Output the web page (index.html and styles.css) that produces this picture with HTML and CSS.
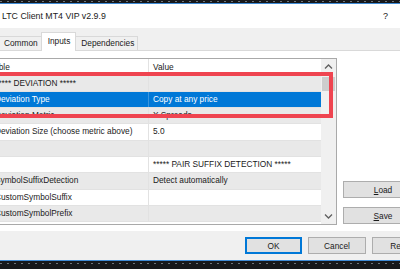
FILE: index.html
```html
<!DOCTYPE html>
<html lang="en">
<head>
  <meta charset="UTF-8">
  <title>LTC Client MT4 VIP v2.9.9</title>
  <link rel="stylesheet" href="styles.css">
</head>
<body>
  <div class="screen">
    <div class="strip strip-top"></div>
    <div class="window">
      <div class="titlebar">
        <span class="title">LTC Client MT4 VIP v2.9.9</span>
        <span class="help">?</span>
      </div>
      <div class="tabs">
        <div class="tab first">Common</div>
        <div class="tab active">Inputs</div>
        <div class="tab">Dependencies</div>
      </div>
      <div class="page">
        <div class="grid-box">
          <div class="list">
            <div class="row head"><div class="cell name">Variable</div><div class="cell">Value</div></div>
            <div class="row alt"><div class="cell name">***** DEVIATION *****</div><div class="cell"></div></div>
            <div class="row selected"><div class="cell name">Deviation Type</div><div class="cell">Copy at any price</div></div>
            <div class="row alt"><div class="cell name">Deviation Metric</div><div class="cell">X Spreads</div></div>
            <div class="row"><div class="cell name">Deviation Size (choose metric above)</div><div class="cell">5.0</div></div>
            <div class="row alt"><div class="cell name"></div><div class="cell"></div></div>
            <div class="row"><div class="cell name"></div><div class="cell">***** PAIR SUFFIX DETECTION *****</div></div>
            <div class="row alt"><div class="cell name">SymbolSuffixDetection</div><div class="cell">Detect automatically</div></div>
            <div class="row"><div class="cell name">CustomSymbolSuffix</div><div class="cell"></div></div>
            <div class="row alt"><div class="cell name">CustomSymbolPrefix</div><div class="cell"></div></div>
          </div>
          <div class="scrollbar">
            <svg class="arrow" width="15" height="16" viewBox="0 0 15 16"><path d="M4 9.5 L7.5 6 L11 9.5" fill="none" stroke="#606060" stroke-width="1.3"/></svg>
            <div class="thumb"></div>
            <div class="track"></div>
            <svg class="arrow" width="15" height="16" viewBox="0 0 15 16"><path d="M4 6.5 L7.5 10 L11 6.5" fill="none" stroke="#606060" stroke-width="1.3"/></svg>
          </div>
        </div>
        <div class="side">
          <button class="btn wide"><u>L</u>oad</button>
          <button class="btn wide"><u>S</u>ave</button>
        </div>
      </div>
      <div class="footer">
        <button class="btn default">OK</button>
        <button class="btn">Cancel</button>
        <button class="btn">Reset</button>
      </div>
    </div>
    <div class="strip strip-bottom"></div>
    <div class="highlight"></div>
  </div>
</body>
</html>
```

FILE: styles.css
```css
* {
  margin: 0;
  padding: 0;
  box-sizing: border-box;
}

body {
  width: 400px;
  height: 269px;
  overflow: hidden;
  background: #16181b;
  font-family: 'Liberation Sans', Arial, sans-serif;
  font-size: 8.3px;
  color: #1a1a1a;
}

.screen {
  position: relative;
  width: 400px;
  height: 269px;
  overflow: hidden;
}

/* desktop strips above and below the dialog */
.strip {
  background-color: #16181b;
  background-image: repeating-linear-gradient(90deg, #6f7478 0 2px, transparent 2px 7px);
  background-repeat: repeat-x;
  background-size: 100% 1px;
}

.strip-top {
  height: 3px;
  background-position: 0 1px;
}

.strip-bottom {
  height: 8px;
  background-position: 0 2px;
}

.window {
  width: 500px;
  margin-left: -40px;
  border-top: 1px solid #3f8bd6;
  border-bottom: 1px solid #3f8bd6;
  background: #f0f0f0;
}

.titlebar {
  height: 24px;
  background: #fff;
  display: flex;
  align-items: center;
  padding-left: 42px;
  font-size: 8.8px;
}

.title {
  flex: 1;
}

.help {
  font-size: 9px;
  margin-right: 72px;
}

/* tab strip */
.tabs {
  height: 23px;
  display: flex;
  align-items: flex-end;
  padding-left: 37px;
  border-bottom: 1px solid #d9d9d9;
}

.tab {
  height: 14px;
  line-height: 12px;
  padding: 0 3px 0 5px;
  border: 1px solid #d9d9d9;
  border-bottom: none;
  background: #f0f0f0;
  margin-right: -1px;
}

.tab.first {
  padding-left: 6px;
}

.tab.active {
  height: 19px;
  line-height: 16px;
  background: #fff;
  margin-bottom: -1px;
  position: relative;
  z-index: 1;
  padding: 0 5px 0 6px;
}

/* tab page */
.page {
  height: 180px;
  background: #fff;
  display: flex;
  padding: 7px 0 6px 2px;
}

.grid-box {
  width: 375px;
  height: 167px;
  border: 1px solid #a9a9a9;
  display: flex;
}

.list {
  flex: 1;
  overflow: hidden;
}

.row {
  display: grid;
  grid-template-columns: 186px 1fr;
  height: 16.3px;
  line-height: 15.3px;
  border-bottom: 1px solid #e2e2e2;
  white-space: nowrap;
}

.row.head {
  height: 16.5px;
  line-height: 16.5px;
  background: #fff;
}

.row.alt {
  background: #e9e9e9;
}

.row.selected {
  background: #0078d7;
  color: #fff;
}

.cell {
  overflow: hidden;
  padding-left: 4px;
}

.cell.name {
  padding-left: 32px;
  border-right: 1px solid #e2e2e2;
}

.head .cell.name {
  padding-left: 17px;
}

.selected .cell.name {
  border-right-color: #3a95de;
}

.scrollbar {
  width: 15px;
  background: #f0f0f0;
  display: flex;
  flex-direction: column;
}

.arrow {
  display: block;
}

.thumb {
  height: 14px;
  margin: 2px 1px 0;
  background: #cdcdcd;
}

.track {
  flex: 1;
}

/* Load / Save */
.side {
  margin-left: 6px;
  display: flex;
  flex-direction: column;
  justify-content: flex-end;
  gap: 9px;
  padding-bottom: 1px;
}

.btn {
  font-family: inherit;
  font-size: 8.3px;
  color: #1a1a1a;
  height: 17px;
  width: 58px;
  background: #e1e1e1;
  border: 1px solid #adadad;
}

.btn.wide {
  width: 80px;
}

.btn.default {
  width: 57px;
  border: 1px solid #0078d7;
  box-shadow: inset 0 0 0 1px #0078d7;
}

.footer {
  height: 29px;
  display: flex;
  justify-content: flex-end;
  gap: 6px;
  padding: 6px 30px 0 0;
}

/* red annotation box */
.highlight {
  position: absolute;
  left: -10px;
  top: 72px;
  width: 343px;
  height: 46px;
  border: 4px solid #ef4450;
}
```
